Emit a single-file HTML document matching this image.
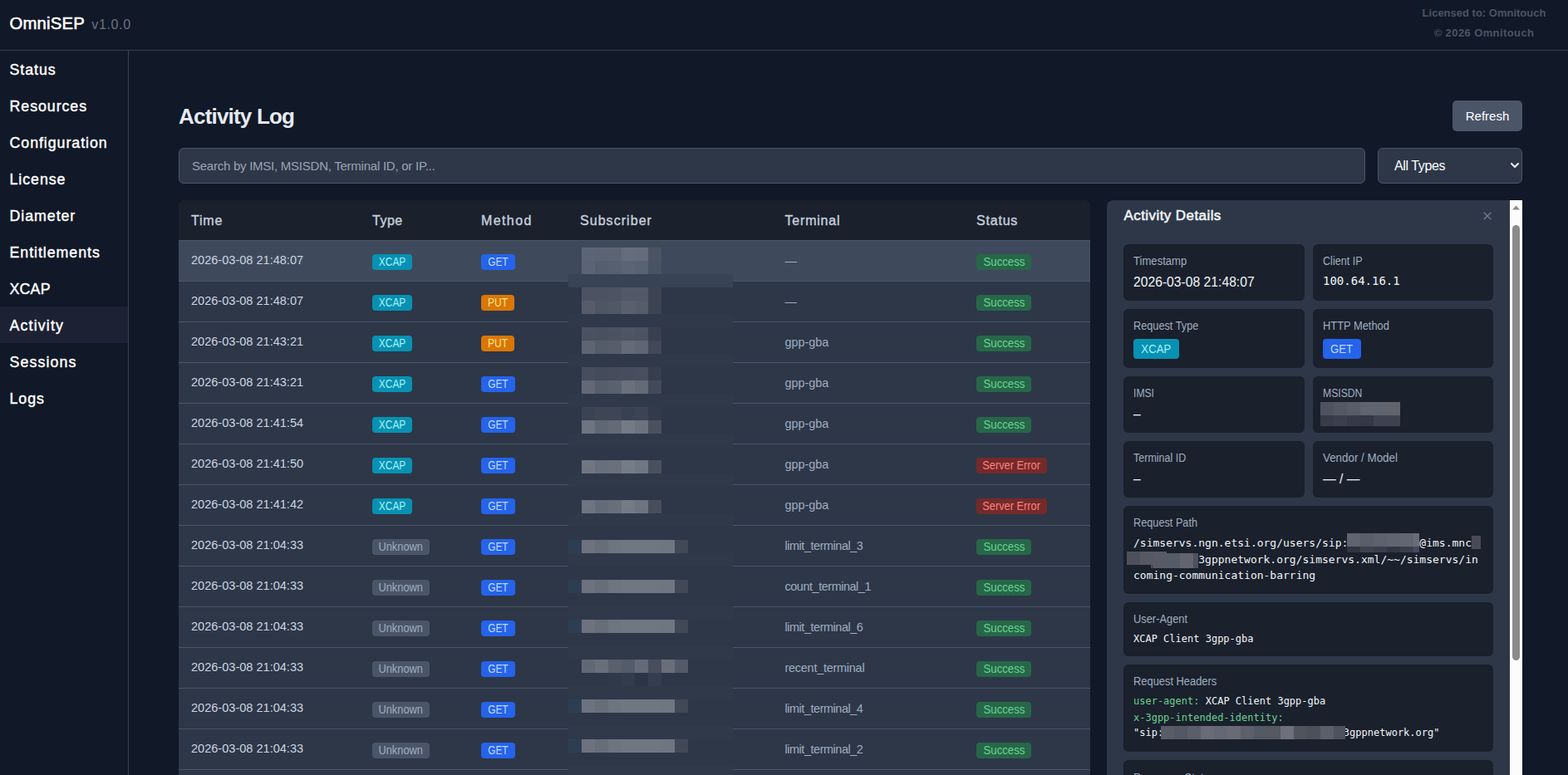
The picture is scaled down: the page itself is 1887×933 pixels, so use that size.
<!DOCTYPE html>
<html lang="en"><head><meta charset="utf-8"><title>OmniSEP - Activity Log</title>
<style>
*{box-sizing:border-box;margin:0;padding:0}
html,body{width:1887px;height:933px;overflow:hidden;background:#111827}
body{position:relative;font-family:"Liberation Sans",sans-serif;color:#fff}
.top{position:absolute;left:0;top:0;width:1887px;height:61px;border-bottom:1px solid #374151}
.brand{position:absolute;left:11.5px;top:13px;line-height:30px;white-space:nowrap}
.brand .name{font-size:20.3px;-webkit-text-stroke:.55px #fff;letter-spacing:.2px;color:#fff}
.brand .ver{font-size:16px;color:#6b7280;margin-left:8.3px;letter-spacing:.65px}
.lic{position:absolute;left:1686px;top:4px;width:200px;text-align:center;font-size:13px;font-weight:bold;color:#4b5563;line-height:24px;white-space:nowrap}
.side{position:absolute;left:0;top:61px;width:155px;height:872px;border-right:1px solid #374151}
.side a{display:block;height:44px;line-height:46px;padding-left:11.5px;font-size:17.8px;-webkit-text-stroke:.42px #fff;letter-spacing:.95px;color:#fff;white-space:nowrap}
.side a.act{background:#1c2134}
.title{position:absolute;left:215px;top:119.5px;font-size:26px;line-height:40px;font-weight:bold;letter-spacing:-.8px;color:#e5eaf2;white-space:nowrap}
.refresh{position:absolute;left:1748px;top:121px;width:84px;height:37px;border:0;border-radius:5px;background:#4a5568;color:#fff;font-family:inherit;font-size:15px;text-align:center}
.search{position:absolute;left:215px;top:178px;width:1428px;height:43px;border:1px solid #4a5568;border-radius:6px;background:#2d3748;color:#9aa3b2;font-size:15px;letter-spacing:-.25px;line-height:41px;padding-left:15px;white-space:nowrap}
.select{position:absolute;left:1658px;top:178px;width:174px;height:43px;border:1px solid #4a5568;border-radius:6px;background:#2d3748;color:#fff;font-size:16px;letter-spacing:-.4px;line-height:42.5px;padding-left:19px;white-space:nowrap}
.select svg{position:absolute;left:159px;top:17px}
.tbl{position:absolute;left:215px;top:241px;width:1097px;height:692px;border-radius:8px 8px 0 0;overflow:hidden;background:#2d3748}
.thead{position:relative;height:49px;background:#1a202c;border-bottom:1px solid #4a5568;font-size:16px;-webkit-text-stroke:.4px #c5cfdb;letter-spacing:.8px;color:#c5cfdb;line-height:50px}
.tr{position:relative;height:49px;border-bottom:1px solid #4a5568;font-size:14.55px;line-height:47px;color:#a0aec0}
.tr.sel{background:#3e4a5c}
.thead span,.tr>span{position:absolute;top:0;white-space:nowrap}
.c1{left:15px}.c2{left:233px}.c3{left:364px}.c4{left:483px}.c5{left:729.5px}.c6{left:960px}
.tm{color:#cbd5e0}
.term{font-size:14.4px;line-height:48px}
.term.u{letter-spacing:-.43px}
.bd{display:inline-block;vertical-align:top;margin-top:16px;height:19px;line-height:19.5px;border-radius:4px;font-size:14px;font-weight:normal;text-align:center;white-space:nowrap}
.bd i{display:inline-block;font-style:normal}
.b-xcap{width:48px;background:#0891b2;color:#a5f3fc}
.b-xcap i{transform:scaleX(.85)}
.b-unk{width:69px;background:#4a5568;color:#a0aec0}
.b-unk i{transform:scaleX(.915)}
.b-get{width:41px;background:#2563eb;color:#bfdbfe}
.b-get i{transform:scaleX(.85)}
.b-put{width:40px;background:#d97706;color:#fde68a}
.b-put i{transform:scaleX(.85)}
.b-ok{width:66px;background:#276749;color:#68d391}
.b-ok i{transform:scaleX(.945)}
.b-err{width:85px;background:#742a2a;color:#fc8181}
.b-err i{transform:scaleX(.915)}
.px{position:absolute}
.det{position:absolute;left:1332px;top:241px;width:500px;height:692px;background:#2d3748;border-radius:8px 0 0 0;overflow:hidden}
.sb{position:absolute;left:485px;top:0;width:15px;height:692px;background:#fcfcfc}
.sb i{position:absolute;left:3px;top:30px;width:9px;height:524px;border-radius:5px;background:#8b8b8b}
.sb svg{position:absolute;left:3px;top:5.5px}
.det h2{position:absolute;left:20.5px;top:7px;font-size:17px;line-height:24px;font-weight:normal;-webkit-text-stroke:.55px #f1f5f9;color:#f1f5f9;letter-spacing:.42px;white-space:nowrap}
.det .x{position:absolute;left:453.4px;top:13.8px}
.card{position:absolute;background:#1a202c;border-radius:6px;padding:0 12px}
.card .l{position:absolute;left:12px;font-size:14px;transform-origin:0 50%;color:#a0aec0;white-space:nowrap;line-height:16px}
.card .v{position:absolute;left:12px;margin-top:.5px;font-size:15.7px;color:#f1f5f9;white-space:nowrap;line-height:20px}
.mono{font-family:"DejaVu Sans Mono","Liberation Mono",monospace;font-size:13px;color:#f1f5f9;white-space:pre;line-height:19.5px;position:absolute;left:12px}
.g{color:#68d391}
.lic div+div{letter-spacing:.4px}
.m12{font-size:12px;line-height:19.5px}
.m14{font-size:14px}
.bd.big{position:absolute;left:12px;top:36px;margin:0;height:24px;line-height:25px;font-size:14.2px}
.bd.big i{transform:scaleX(.93)}

</style></head>
<body>
<header class="top"><div class="brand"><span class="name">OmniSEP</span><span class="ver">v1.0.0</span></div>
<div class="lic"><div>Licensed to: Omnitouch</div><div>© 2026 Omnitouch</div></div></header>
<nav class="side">
<a>Status</a><a>Resources</a><a>Configuration</a><a>License</a><a>Diameter</a><a>Entitlements</a><a style="letter-spacing:.2px">XCAP</a><a class="act" style="letter-spacing:1.15px">Activity</a><a style="letter-spacing:1.1px">Sessions</a><a>Logs</a>
</nav>
<h1 class="title">Activity Log</h1>
<button class="refresh">Refresh</button>
<div class="search"><span>Search by IMSI, MSISDN, Terminal ID, or IP...</span></div>
<div class="select"><span>All Types</span><svg width="10" height="6" viewBox="0 0 10 6"><path d="M1 1 L5 5 L9 1" fill="none" stroke="#fff" stroke-width="1.8" stroke-linecap="round" stroke-linejoin="round"/></svg></div>
<div class="tbl">
<div class="thead"><span class="c1">Time</span><span class="c2" style="letter-spacing:.5px">Type</span><span class="c3" style="letter-spacing:1.4px">Method</span><span class="c4" style="letter-spacing:1.05px">Subscriber</span><span class="c5">Terminal</span><span class="c6">Status</span></div>
<div class="tr sel"><span class="c1 tm">2026-03-08 21:48:07</span><span class="c2"><b class="bd b-xcap"><i>XCAP</i></b></span><span class="c3"><b class="bd b-get"><i>GET</i></b></span><span class="c5 term">—</span><span class="c6"><b class="bd b-ok"><i>Success</i></b></span></div>
<div class="tr"><span class="c1 tm">2026-03-08 21:48:07</span><span class="c2"><b class="bd b-xcap"><i>XCAP</i></b></span><span class="c3"><b class="bd b-put"><i>PUT</i></b></span><span class="c5 term">—</span><span class="c6"><b class="bd b-ok"><i>Success</i></b></span></div>
<div class="tr"><span class="c1 tm">2026-03-08 21:43:21</span><span class="c2"><b class="bd b-xcap"><i>XCAP</i></b></span><span class="c3"><b class="bd b-put"><i>PUT</i></b></span><span class="c5 term">gpp-gba</span><span class="c6"><b class="bd b-ok"><i>Success</i></b></span></div>
<div class="tr"><span class="c1 tm">2026-03-08 21:43:21</span><span class="c2"><b class="bd b-xcap"><i>XCAP</i></b></span><span class="c3"><b class="bd b-get"><i>GET</i></b></span><span class="c5 term">gpp-gba</span><span class="c6"><b class="bd b-ok"><i>Success</i></b></span></div>
<div class="tr"><span class="c1 tm">2026-03-08 21:41:54</span><span class="c2"><b class="bd b-xcap"><i>XCAP</i></b></span><span class="c3"><b class="bd b-get"><i>GET</i></b></span><span class="c5 term">gpp-gba</span><span class="c6"><b class="bd b-ok"><i>Success</i></b></span></div>
<div class="tr"><span class="c1 tm">2026-03-08 21:41:50</span><span class="c2"><b class="bd b-xcap"><i>XCAP</i></b></span><span class="c3"><b class="bd b-get"><i>GET</i></b></span><span class="c5 term">gpp-gba</span><span class="c6"><b class="bd b-err"><i>Server Error</i></b></span></div>
<div class="tr"><span class="c1 tm">2026-03-08 21:41:42</span><span class="c2"><b class="bd b-xcap"><i>XCAP</i></b></span><span class="c3"><b class="bd b-get"><i>GET</i></b></span><span class="c5 term">gpp-gba</span><span class="c6"><b class="bd b-err"><i>Server Error</i></b></span></div>
<div class="tr"><span class="c1 tm">2026-03-08 21:04:33</span><span class="c2"><b class="bd b-unk"><i>Unknown</i></b></span><span class="c3"><b class="bd b-get"><i>GET</i></b></span><span class="c5 term u">limit_terminal_3</span><span class="c6"><b class="bd b-ok"><i>Success</i></b></span></div>
<div class="tr"><span class="c1 tm">2026-03-08 21:04:33</span><span class="c2"><b class="bd b-unk"><i>Unknown</i></b></span><span class="c3"><b class="bd b-get"><i>GET</i></b></span><span class="c5 term u">count_terminal_1</span><span class="c6"><b class="bd b-ok"><i>Success</i></b></span></div>
<div class="tr"><span class="c1 tm">2026-03-08 21:04:33</span><span class="c2"><b class="bd b-unk"><i>Unknown</i></b></span><span class="c3"><b class="bd b-get"><i>GET</i></b></span><span class="c5 term u">limit_terminal_6</span><span class="c6"><b class="bd b-ok"><i>Success</i></b></span></div>
<div class="tr"><span class="c1 tm">2026-03-08 21:04:33</span><span class="c2"><b class="bd b-unk"><i>Unknown</i></b></span><span class="c3"><b class="bd b-get"><i>GET</i></b></span><span class="c5 term u" style="letter-spacing:-.22px">recent_terminal</span><span class="c6"><b class="bd b-ok"><i>Success</i></b></span></div>
<div class="tr"><span class="c1 tm">2026-03-08 21:04:33</span><span class="c2"><b class="bd b-unk"><i>Unknown</i></b></span><span class="c3"><b class="bd b-get"><i>GET</i></b></span><span class="c5 term u">limit_terminal_4</span><span class="c6"><b class="bd b-ok"><i>Success</i></b></span></div>
<div class="tr"><span class="c1 tm">2026-03-08 21:04:33</span><span class="c2"><b class="bd b-unk"><i>Unknown</i></b></span><span class="c3"><b class="bd b-get"><i>GET</i></b></span><span class="c5 term u">limit_terminal_2</span><span class="c6"><b class="bd b-ok"><i>Success</i></b></span></div>
<div class="tr"></div>
<i class="px" style="left:469px;top:89px;width:198px;height:16px;background:rgb(56,67,85)"></i>
<i class="px" style="left:469px;top:137px;width:198px;height:16px;background:rgb(47,57,74)"></i>
<i class="px" style="left:469px;top:185px;width:198px;height:16px;background:rgb(47,57,74)"></i>
<i class="px" style="left:469px;top:233px;width:198px;height:16px;background:rgb(47,57,74)"></i>
<i class="px" style="left:469px;top:281px;width:198px;height:16px;background:rgb(47,57,74)"></i>
<i class="px" style="left:469px;top:329px;width:198px;height:16px;background:rgb(47,57,74)"></i>
<i class="px" style="left:469px;top:377px;width:198px;height:16px;background:rgb(47,57,74)"></i>
<i class="px" style="left:469px;top:425px;width:198px;height:16px;background:rgb(47,57,74)"></i>
<i class="px" style="left:469px;top:489px;width:198px;height:16px;background:rgb(47,57,74)"></i>
<i class="px" style="left:469px;top:537px;width:198px;height:16px;background:rgb(47,57,74)"></i>
<i class="px" style="left:469px;top:585px;width:198px;height:16px;background:rgb(47,57,74)"></i>
<i class="px" style="left:469px;top:633px;width:198px;height:16px;background:rgb(47,57,74)"></i>
<i class="px" style="left:469px;top:681px;width:198px;height:16px;background:rgb(47,57,74)"></i>
<i class="px" style="left:485px;top:57px;width:16px;height:16px;background:rgb(92,101,117)"></i>
<i class="px" style="left:501px;top:57px;width:16px;height:16px;background:rgb(91,100,116)"></i>
<i class="px" style="left:517px;top:57px;width:16px;height:16px;background:rgb(93,101,117)"></i>
<i class="px" style="left:533px;top:57px;width:16px;height:16px;background:rgb(101,109,124)"></i>
<i class="px" style="left:549px;top:57px;width:16px;height:16px;background:rgb(100,108,123)"></i>
<i class="px" style="left:565px;top:57px;width:16px;height:16px;background:rgb(76,84,100)"></i>
<i class="px" style="left:485px;top:73px;width:16px;height:16px;background:rgb(91,100,116)"></i>
<i class="px" style="left:501px;top:73px;width:16px;height:16px;background:rgb(84,95,110)"></i>
<i class="px" style="left:517px;top:73px;width:16px;height:16px;background:rgb(87,96,112)"></i>
<i class="px" style="left:533px;top:73px;width:16px;height:16px;background:rgb(91,100,116)"></i>
<i class="px" style="left:549px;top:73px;width:16px;height:16px;background:rgb(89,98,114)"></i>
<i class="px" style="left:565px;top:73px;width:16px;height:16px;background:rgb(72,83,100)"></i>
<i class="px" style="left:485px;top:105px;width:16px;height:16px;background:rgb(76,82,97)"></i>
<i class="px" style="left:501px;top:105px;width:16px;height:16px;background:rgb(76,82,97)"></i>
<i class="px" style="left:517px;top:105px;width:16px;height:16px;background:rgb(77,83,98)"></i>
<i class="px" style="left:533px;top:105px;width:16px;height:16px;background:rgb(82,88,103)"></i>
<i class="px" style="left:549px;top:105px;width:16px;height:16px;background:rgb(82,88,103)"></i>
<i class="px" style="left:565px;top:105px;width:16px;height:16px;background:rgb(62,67,82)"></i>
<i class="px" style="left:485px;top:121px;width:16px;height:16px;background:rgb(86,92,106)"></i>
<i class="px" style="left:501px;top:121px;width:16px;height:16px;background:rgb(78,85,99)"></i>
<i class="px" style="left:517px;top:121px;width:16px;height:16px;background:rgb(81,87,101)"></i>
<i class="px" style="left:533px;top:121px;width:16px;height:16px;background:rgb(89,95,109)"></i>
<i class="px" style="left:549px;top:121px;width:16px;height:16px;background:rgb(86,92,106)"></i>
<i class="px" style="left:565px;top:121px;width:16px;height:16px;background:rgb(60,67,82)"></i>
<i class="px" style="left:485px;top:153px;width:16px;height:16px;background:rgb(74,81,96)"></i>
<i class="px" style="left:501px;top:153px;width:16px;height:16px;background:rgb(73,80,95)"></i>
<i class="px" style="left:517px;top:153px;width:16px;height:16px;background:rgb(76,82,97)"></i>
<i class="px" style="left:533px;top:153px;width:16px;height:16px;background:rgb(78,85,100)"></i>
<i class="px" style="left:549px;top:153px;width:16px;height:16px;background:rgb(76,83,98)"></i>
<i class="px" style="left:565px;top:153px;width:16px;height:16px;background:rgb(58,64,80)"></i>
<i class="px" style="left:485px;top:169px;width:16px;height:16px;background:rgb(94,100,113)"></i>
<i class="px" style="left:501px;top:169px;width:16px;height:16px;background:rgb(84,91,105)"></i>
<i class="px" style="left:517px;top:169px;width:16px;height:16px;background:rgb(87,93,107)"></i>
<i class="px" style="left:533px;top:169px;width:16px;height:16px;background:rgb(100,106,119)"></i>
<i class="px" style="left:549px;top:169px;width:16px;height:16px;background:rgb(95,101,114)"></i>
<i class="px" style="left:565px;top:169px;width:16px;height:16px;background:rgb(66,72,87)"></i>
<i class="px" style="left:485px;top:201px;width:16px;height:16px;background:rgb(70,77,92)"></i>
<i class="px" style="left:501px;top:201px;width:16px;height:16px;background:rgb(68,75,90)"></i>
<i class="px" style="left:517px;top:201px;width:16px;height:16px;background:rgb(70,76,91)"></i>
<i class="px" style="left:533px;top:201px;width:16px;height:16px;background:rgb(70,77,92)"></i>
<i class="px" style="left:549px;top:201px;width:16px;height:16px;background:rgb(72,78,93)"></i>
<i class="px" style="left:565px;top:201px;width:16px;height:16px;background:rgb(55,62,78)"></i>
<i class="px" style="left:485px;top:217px;width:16px;height:16px;background:rgb(98,104,117)"></i>
<i class="px" style="left:501px;top:217px;width:16px;height:16px;background:rgb(86,93,107)"></i>
<i class="px" style="left:517px;top:217px;width:16px;height:16px;background:rgb(90,96,110)"></i>
<i class="px" style="left:533px;top:217px;width:16px;height:16px;background:rgb(106,112,124)"></i>
<i class="px" style="left:549px;top:217px;width:16px;height:16px;background:rgb(100,106,118)"></i>
<i class="px" style="left:565px;top:217px;width:16px;height:16px;background:rgb(68,74,89)"></i>
<i class="px" style="left:485px;top:249px;width:16px;height:16px;background:rgb(58,67,82)"></i>
<i class="px" style="left:501px;top:249px;width:16px;height:16px;background:rgb(62,69,84)"></i>
<i class="px" style="left:517px;top:249px;width:16px;height:16px;background:rgb(62,69,84)"></i>
<i class="px" style="left:533px;top:249px;width:16px;height:16px;background:rgb(56,65,82)"></i>
<i class="px" style="left:549px;top:249px;width:16px;height:16px;background:rgb(60,67,84)"></i>
<i class="px" style="left:565px;top:249px;width:16px;height:16px;background:rgb(50,58,75)"></i>
<i class="px" style="left:485px;top:265px;width:16px;height:16px;background:rgb(110,116,128)"></i>
<i class="px" style="left:501px;top:265px;width:16px;height:16px;background:rgb(96,103,116)"></i>
<i class="px" style="left:517px;top:265px;width:16px;height:16px;background:rgb(100,106,118)"></i>
<i class="px" style="left:533px;top:265px;width:16px;height:16px;background:rgb(116,122,134)"></i>
<i class="px" style="left:549px;top:265px;width:16px;height:16px;background:rgb(108,114,126)"></i>
<i class="px" style="left:565px;top:265px;width:16px;height:16px;background:rgb(74,80,94)"></i>
<i class="px" style="left:485px;top:313px;width:16px;height:16px;background:rgb(112,118,130)"></i>
<i class="px" style="left:501px;top:313px;width:16px;height:16px;background:rgb(104,110,123)"></i>
<i class="px" style="left:517px;top:313px;width:16px;height:16px;background:rgb(106,112,124)"></i>
<i class="px" style="left:533px;top:313px;width:16px;height:16px;background:rgb(118,124,136)"></i>
<i class="px" style="left:549px;top:313px;width:16px;height:16px;background:rgb(112,118,130)"></i>
<i class="px" style="left:565px;top:313px;width:16px;height:16px;background:rgb(74,80,94)"></i>
<i class="px" style="left:485px;top:361px;width:16px;height:16px;background:rgb(110,116,128)"></i>
<i class="px" style="left:501px;top:361px;width:16px;height:16px;background:rgb(100,107,120)"></i>
<i class="px" style="left:517px;top:361px;width:16px;height:16px;background:rgb(104,110,122)"></i>
<i class="px" style="left:533px;top:361px;width:16px;height:16px;background:rgb(116,122,134)"></i>
<i class="px" style="left:549px;top:361px;width:16px;height:16px;background:rgb(110,116,128)"></i>
<i class="px" style="left:565px;top:361px;width:16px;height:16px;background:rgb(72,78,92)"></i>
<i class="px" style="left:469px;top:409px;width:16px;height:16px;background:rgb(46,62,82)"></i>
<i class="px" style="left:485px;top:409px;width:16px;height:16px;background:rgb(110,114,126)"></i>
<i class="px" style="left:501px;top:409px;width:16px;height:16px;background:rgb(104,109,122)"></i>
<i class="px" style="left:517px;top:409px;width:16px;height:16px;background:rgb(110,116,128)"></i>
<i class="px" style="left:533px;top:409px;width:16px;height:16px;background:rgb(112,118,130)"></i>
<i class="px" style="left:549px;top:409px;width:16px;height:16px;background:rgb(112,118,130)"></i>
<i class="px" style="left:565px;top:409px;width:16px;height:16px;background:rgb(112,118,130)"></i>
<i class="px" style="left:581px;top:409px;width:16px;height:16px;background:rgb(112,117,130)"></i>
<i class="px" style="left:597px;top:409px;width:16px;height:16px;background:rgb(66,72,86)"></i>
<i class="px" style="left:469px;top:457px;width:16px;height:16px;background:rgb(46,62,82)"></i>
<i class="px" style="left:485px;top:457px;width:16px;height:16px;background:rgb(110,114,126)"></i>
<i class="px" style="left:501px;top:457px;width:16px;height:16px;background:rgb(104,109,122)"></i>
<i class="px" style="left:517px;top:457px;width:16px;height:16px;background:rgb(110,116,128)"></i>
<i class="px" style="left:533px;top:457px;width:16px;height:16px;background:rgb(112,118,130)"></i>
<i class="px" style="left:549px;top:457px;width:16px;height:16px;background:rgb(112,118,130)"></i>
<i class="px" style="left:565px;top:457px;width:16px;height:16px;background:rgb(112,118,130)"></i>
<i class="px" style="left:581px;top:457px;width:16px;height:16px;background:rgb(112,117,130)"></i>
<i class="px" style="left:597px;top:457px;width:16px;height:16px;background:rgb(66,72,86)"></i>
<i class="px" style="left:469px;top:505px;width:16px;height:16px;background:rgb(46,62,82)"></i>
<i class="px" style="left:485px;top:505px;width:16px;height:16px;background:rgb(110,114,126)"></i>
<i class="px" style="left:501px;top:505px;width:16px;height:16px;background:rgb(104,109,122)"></i>
<i class="px" style="left:517px;top:505px;width:16px;height:16px;background:rgb(110,116,128)"></i>
<i class="px" style="left:533px;top:505px;width:16px;height:16px;background:rgb(112,118,130)"></i>
<i class="px" style="left:549px;top:505px;width:16px;height:16px;background:rgb(112,118,130)"></i>
<i class="px" style="left:565px;top:505px;width:16px;height:16px;background:rgb(112,118,130)"></i>
<i class="px" style="left:581px;top:505px;width:16px;height:16px;background:rgb(112,117,130)"></i>
<i class="px" style="left:597px;top:505px;width:16px;height:16px;background:rgb(66,72,86)"></i>
<i class="px" style="left:469px;top:601px;width:16px;height:16px;background:rgb(46,62,82)"></i>
<i class="px" style="left:485px;top:601px;width:16px;height:16px;background:rgb(110,114,126)"></i>
<i class="px" style="left:501px;top:601px;width:16px;height:16px;background:rgb(104,109,122)"></i>
<i class="px" style="left:517px;top:601px;width:16px;height:16px;background:rgb(110,116,128)"></i>
<i class="px" style="left:533px;top:601px;width:16px;height:16px;background:rgb(112,118,130)"></i>
<i class="px" style="left:549px;top:601px;width:16px;height:16px;background:rgb(112,118,130)"></i>
<i class="px" style="left:565px;top:601px;width:16px;height:16px;background:rgb(112,118,130)"></i>
<i class="px" style="left:581px;top:601px;width:16px;height:16px;background:rgb(112,117,130)"></i>
<i class="px" style="left:597px;top:601px;width:16px;height:16px;background:rgb(66,72,86)"></i>
<i class="px" style="left:469px;top:649px;width:16px;height:16px;background:rgb(46,62,82)"></i>
<i class="px" style="left:485px;top:649px;width:16px;height:16px;background:rgb(110,114,126)"></i>
<i class="px" style="left:501px;top:649px;width:16px;height:16px;background:rgb(104,109,122)"></i>
<i class="px" style="left:517px;top:649px;width:16px;height:16px;background:rgb(110,116,128)"></i>
<i class="px" style="left:533px;top:649px;width:16px;height:16px;background:rgb(112,118,130)"></i>
<i class="px" style="left:549px;top:649px;width:16px;height:16px;background:rgb(112,118,130)"></i>
<i class="px" style="left:565px;top:649px;width:16px;height:16px;background:rgb(112,118,130)"></i>
<i class="px" style="left:581px;top:649px;width:16px;height:16px;background:rgb(112,117,130)"></i>
<i class="px" style="left:597px;top:649px;width:16px;height:16px;background:rgb(66,72,86)"></i>
<i class="px" style="left:485px;top:553px;width:16px;height:16px;background:rgb(96,104,118)"></i>
<i class="px" style="left:501px;top:553px;width:16px;height:16px;background:rgb(104,110,122)"></i>
<i class="px" style="left:517px;top:553px;width:16px;height:16px;background:rgb(92,96,108)"></i>
<i class="px" style="left:533px;top:553px;width:16px;height:16px;background:rgb(82,92,106)"></i>
<i class="px" style="left:549px;top:553px;width:16px;height:16px;background:rgb(100,106,120)"></i>
<i class="px" style="left:565px;top:553px;width:16px;height:16px;background:rgb(72,78,94)"></i>
<i class="px" style="left:581px;top:553px;width:16px;height:16px;background:rgb(106,110,122)"></i>
<i class="px" style="left:597px;top:553px;width:16px;height:16px;background:rgb(84,90,104)"></i>
<i class="px" style="left:517px;top:569px;width:16px;height:16px;background:rgb(47,57,74)"></i>
<i class="px" style="left:533px;top:569px;width:16px;height:16px;background:rgb(50,60,77)"></i>
<i class="px" style="left:549px;top:569px;width:16px;height:16px;background:rgb(43,53,70)"></i>
<i class="px" style="left:565px;top:569px;width:16px;height:16px;background:rgb(52,62,80)"></i>
</div>
<div class="det">
<h2>Activity Details</h2>
<svg class="x" width="10" height="10" viewBox="0 0 10 10"><path d="M.7 .7 L9.3 9.3 M9.3 .7 L.7 9.3" stroke="#718096" stroke-width="1.3" fill="none"/></svg>
<div class="card" style="left:20px;top:53px;width:218px;height:68px"><span class="l" style="top:12px;transform:scaleX(0.936)">Timestamp</span><span class="v" style="top:35px">2026-03-08 21:48:07</span></div>
<div class="card" style="left:248px;top:53px;width:217px;height:68px"><span class="l" style="top:12px;transform:scaleX(0.9)">Client IP</span><span class="mono m14" style="top:35px">100.64.16.1</span></div>
<div class="card" style="left:20px;top:131px;width:218px;height:71px"><span class="l" style="top:12px;transform:scaleX(0.909)">Request Type</span><b class="bd b-xcap big" style="width:55px"><i>XCAP</i></b></div>
<div class="card" style="left:248px;top:131px;width:217px;height:71px"><span class="l" style="top:12px;transform:scaleX(0.92)">HTTP Method</span><b class="bd b-get big" style="width:46px"><i>GET</i></b></div>
<div class="card" style="left:20px;top:212px;width:218px;height:68px"><span class="l" style="top:12px;transform:scaleX(0.868)">IMSI</span><span class="v" style="top:35px">–</span></div>
<div class="card" style="left:248px;top:212px;width:217px;height:68px"><span class="l" style="top:12px;transform:scaleX(0.87)">MSISDN</span></div>
<div class="card" style="left:20px;top:290px;width:218px;height:68px"><span class="l" style="top:12px;transform:scaleX(0.894)">Terminal ID</span><span class="v" style="top:35px">–</span></div>
<div class="card" style="left:248px;top:290px;width:217px;height:68px"><span class="l" style="top:12px;transform:scaleX(0.955)">Vendor / Model</span><span class="v" style="top:35px">— / —</span></div>
<div class="card" style="left:20px;top:368px;width:445px;height:106px"><span class="l" style="top:12px;transform:scaleX(0.908)">Request Path</span><span class="mono" style="top:35px">/simservs.ngn.etsi.org/users/sip:           @ims.mnc
          3gppnetwork.org/simservs.xml/~~/simservs/in
coming-communication-barring</span></div>
<div class="card" style="left:20px;top:484px;width:445px;height:65px"><span class="l" style="top:12px;transform:scaleX(0.918)">User-Agent</span><span class="mono m12" style="top:35px">XCAP Client 3gpp-gba</span></div>
<div class="card" style="left:20px;top:559px;width:445px;height:105px"><span class="l" style="top:12px;transform:scaleX(0.92)">Request Headers</span><span class="mono m12" style="top:35px"><span class="g">user-agent:</span> XCAP Client 3gpp-gba
<span class="g">x-3gpp-intended-identity:</span>
<span style="position:relative;top:-1px">"sip:                              3gppnetwork.org"</span></span></div>
<div class="card" style="left:20px;top:674px;width:445px;height:60px"><span class="l" style="top:13px;transform:scaleX(0.92)">Response Status</span></div>
<i class="px" style="left:257px;top:243px;width:16px;height:16px;background:rgb(78,82,96)"></i>
<i class="px" style="left:273px;top:243px;width:16px;height:16px;background:rgb(84,88,101)"></i>
<i class="px" style="left:289px;top:243px;width:16px;height:16px;background:rgb(88,92,104)"></i>
<i class="px" style="left:305px;top:243px;width:16px;height:16px;background:rgb(96,100,112)"></i>
<i class="px" style="left:321px;top:243px;width:16px;height:16px;background:rgb(96,100,112)"></i>
<i class="px" style="left:337px;top:243px;width:16px;height:16px;background:rgb(98,99,108)"></i>
<i class="px" style="left:257px;top:259px;width:16px;height:13px;background:rgb(56,60,74)"></i>
<i class="px" style="left:273px;top:259px;width:16px;height:13px;background:rgb(60,64,78)"></i>
<i class="px" style="left:289px;top:259px;width:16px;height:13px;background:rgb(54,58,72)"></i>
<i class="px" style="left:305px;top:259px;width:16px;height:13px;background:rgb(52,56,70)"></i>
<i class="px" style="left:321px;top:259px;width:16px;height:13px;background:rgb(62,66,80)"></i>
<i class="px" style="left:337px;top:259px;width:16px;height:13px;background:rgb(62,66,80)"></i>
<i class="px" style="left:289px;top:401px;width:16px;height:16px;background:rgb(96,100,112)"></i>
<i class="px" style="left:305px;top:401px;width:16px;height:16px;background:rgb(90,94,106)"></i>
<i class="px" style="left:321px;top:401px;width:16px;height:16px;background:rgb(94,98,110)"></i>
<i class="px" style="left:337px;top:401px;width:16px;height:16px;background:rgb(96,100,112)"></i>
<i class="px" style="left:353px;top:401px;width:16px;height:16px;background:rgb(98,102,114)"></i>
<i class="px" style="left:369px;top:401px;width:7px;height:16px;background:rgb(104,108,118)"></i>
<i class="px" style="left:289px;top:417px;width:16px;height:7px;background:rgb(48,52,66)"></i>
<i class="px" style="left:305px;top:417px;width:16px;height:7px;background:rgb(62,66,80)"></i>
<i class="px" style="left:321px;top:417px;width:16px;height:7px;background:rgb(58,62,76)"></i>
<i class="px" style="left:337px;top:417px;width:16px;height:7px;background:rgb(50,54,68)"></i>
<i class="px" style="left:353px;top:417px;width:16px;height:7px;background:rgb(58,62,76)"></i>
<i class="px" style="left:369px;top:417px;width:7px;height:7px;background:rgb(70,74,88)"></i>
<i class="px" style="left:439px;top:404px;width:11px;height:16px;background:rgb(72,74,88)"></i>
<i class="px" style="left:24px;top:423px;width:16px;height:16px;background:rgb(78,80,92)"></i>
<i class="px" style="left:40px;top:423px;width:16px;height:16px;background:rgb(86,88,100)"></i>
<i class="px" style="left:56px;top:423px;width:16px;height:20px;background:rgb(88,90,102)"></i>
<i class="px" style="left:72px;top:425px;width:16px;height:18px;background:rgb(84,92,104)"></i>
<i class="px" style="left:88px;top:425px;width:16px;height:18px;background:rgb(98,100,112)"></i>
<i class="px" style="left:104px;top:425px;width:6px;height:18px;background:rgb(78,80,94)"></i>
<i class="px" style="left:53px;top:439px;width:3px;height:4px;background:rgb(70,74,88)"></i>
<i class="px" style="left:65px;top:633px;width:16px;height:16px;background:rgb(88,92,104)"></i>
<i class="px" style="left:81px;top:633px;width:16px;height:16px;background:rgb(84,88,100)"></i>
<i class="px" style="left:97px;top:633px;width:16px;height:16px;background:rgb(90,94,106)"></i>
<i class="px" style="left:113px;top:633px;width:16px;height:16px;background:rgb(104,108,118)"></i>
<i class="px" style="left:129px;top:633px;width:16px;height:16px;background:rgb(100,104,114)"></i>
<i class="px" style="left:145px;top:633px;width:16px;height:16px;background:rgb(104,106,116)"></i>
<i class="px" style="left:161px;top:633px;width:16px;height:16px;background:rgb(92,96,106)"></i>
<i class="px" style="left:177px;top:633px;width:16px;height:16px;background:rgb(82,90,100)"></i>
<i class="px" style="left:193px;top:633px;width:16px;height:16px;background:rgb(86,88,98)"></i>
<i class="px" style="left:209px;top:633px;width:16px;height:16px;background:rgb(110,112,124)"></i>
<i class="px" style="left:225px;top:633px;width:16px;height:16px;background:rgb(80,84,92)"></i>
<i class="px" style="left:241px;top:633px;width:16px;height:16px;background:rgb(76,80,90)"></i>
<i class="px" style="left:257px;top:633px;width:16px;height:16px;background:rgb(90,94,104)"></i>
<i class="px" style="left:273px;top:633px;width:14px;height:16px;background:rgb(78,82,94)"></i>
<div class="sb"><svg width="9" height="6" viewBox="0 0 9 6"><path d="M0 5.5 L4.5 .5 L9 5.5 Z" fill="#8b8b8b"/></svg><i></i></div>
</div>
</body></html>
